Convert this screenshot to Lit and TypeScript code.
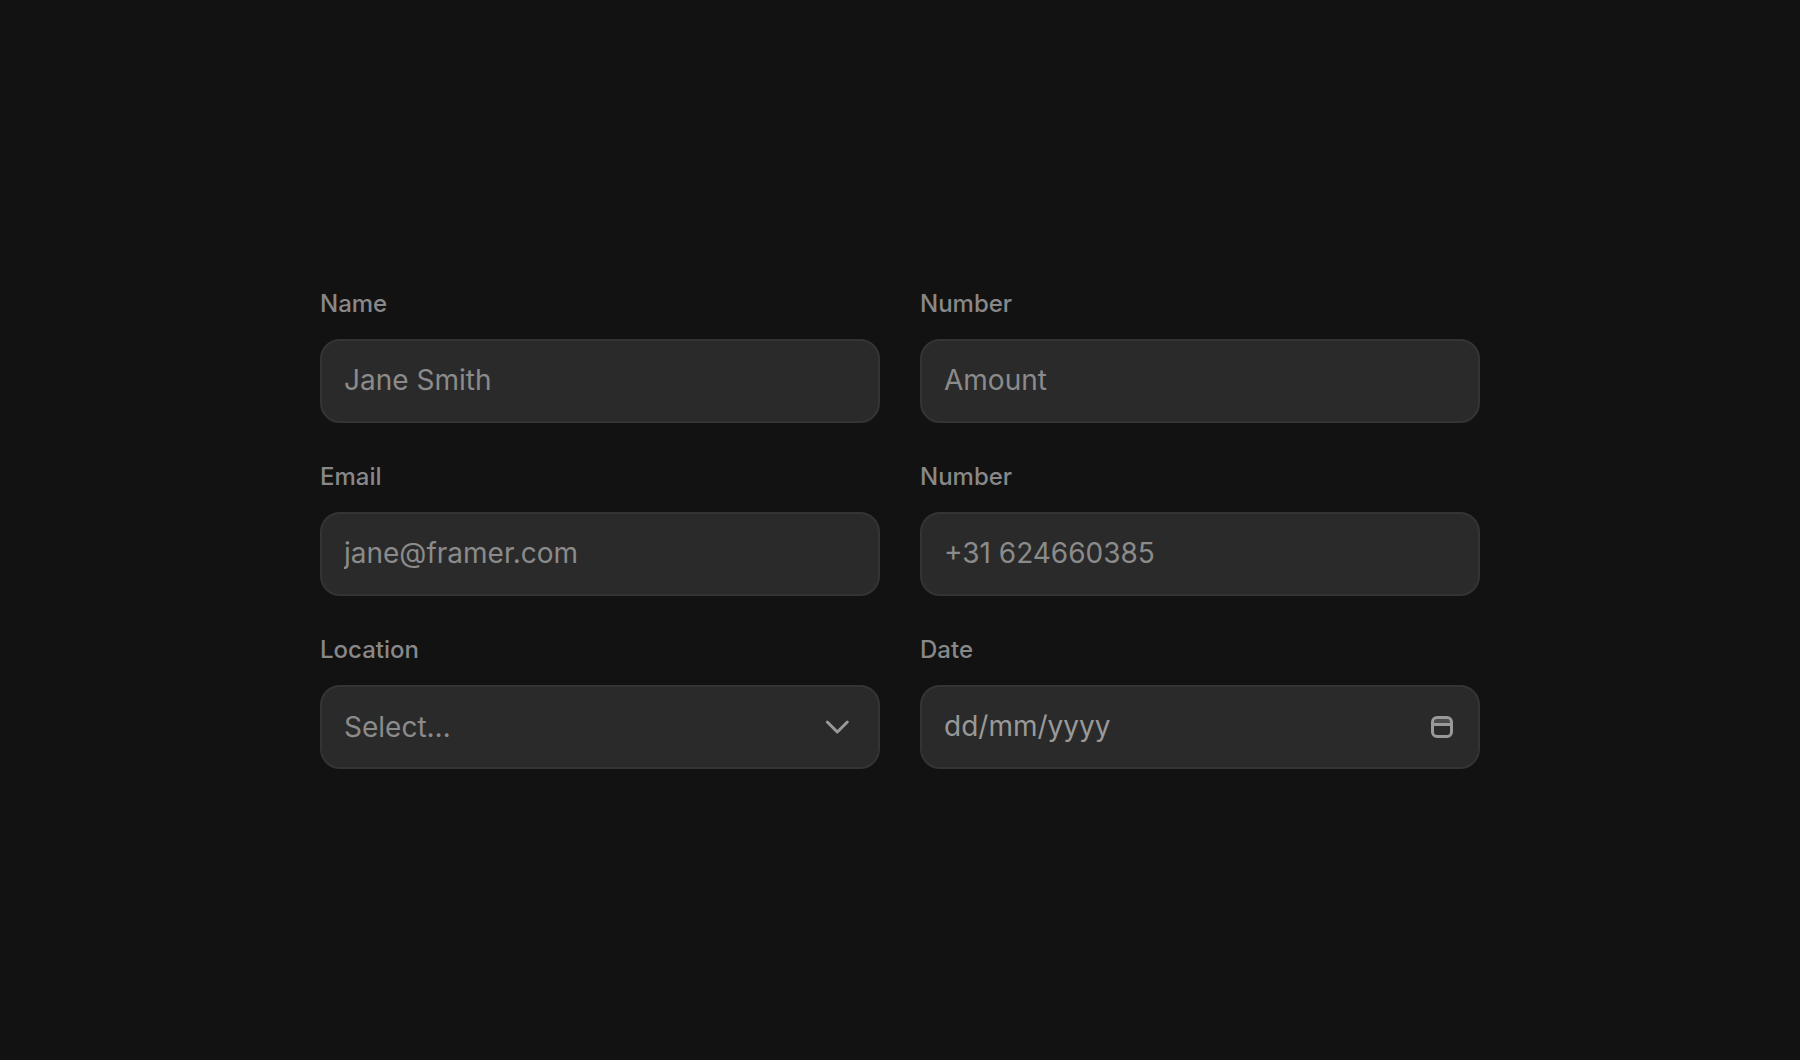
import { LitElement, html, css } from "lit";
import { customElement } from "lit/decorators.js";

interface TextField {
  id: string;
  label: string;
  type: string;
  placeholder: string;
}

const fields: TextField[] = [
  { id: "name", label: "Name", type: "text", placeholder: "Jane Smith" },
  { id: "amount", label: "Number", type: "text", placeholder: "Amount" },
  { id: "email", label: "Email", type: "email", placeholder: "jane@framer.com" },
  { id: "phone", label: "Number", type: "tel", placeholder: "+31 624660385" },
];

@customElement("app-root")
export class AppRoot extends LitElement {
  static styles = css`
    :host {
      display: block;
      font-family: Inter, "Liberation Sans", sans-serif;
      color: #888;
    }
    * {
      box-sizing: border-box;
    }
    .page {
      min-height: 100vh;
      display: grid;
      place-items: center;
      background: #121212;
    }
    .form {
      width: 100%;
      max-width: 1240px;
      padding: 40px 40px 42px;
      display: grid;
      grid-template-columns: repeat(2, minmax(0, 1fr));
      gap: 39px 40px;
    }
    .field {
      display: flex;
      flex-direction: column;
      gap: 21px;
    }
    .label {
      font-size: 24px;
      line-height: 29px;
      font-weight: 500;
    }
    .box {
      display: flex;
      align-items: center;
      height: 84px;
      padding: 0 22px;
      border: 2px solid #343434;
      border-radius: 20px;
      background: #2a2a2a;
    }
    .box:focus-within {
      border-color: #09f;
    }
    .input {
      flex: 1;
      min-width: 0;
      height: 100%;
      margin: 0;
      padding: 0 0 2px;
      border: 0;
      outline: 0;
      background: transparent;
      color: #8b8b8b;
      font: 400 28px/34px Inter, "Liberation Sans", sans-serif;
      appearance: none;
    }
    .input::placeholder {
      color: #8b8b8b;
      opacity: 1;
    }
    .date,
    .date::placeholder {
      color: #999;
    }
    .stack {
      flex: 1;
      height: 100%;
      display: grid;
      grid-template-columns: minmax(0, 1fr) 32px;
      align-items: center;
    }
    .stack .input {
      grid-area: 1 / 1 / 2 / 3;
      padding: 0;
    }
    .icon {
      display: block;
      color: #999;
      pointer-events: none;
    }
    .stack .icon {
      grid-area: 1 / 2 / 2 / 3;
    }
    .picker {
      padding: 0;
      border: 0;
      background: none;
      cursor: pointer;
    }
  `;

  render() {
    return html`
      <main class="page">
        <form class="form">
          ${fields.map(
            (f) => html`
              <div class="field">
                <label class="label" for=${f.id}>${f.label}</label>
                <div class="box">
                  <input class="input" id=${f.id} name=${f.id} type=${f.type} placeholder=${f.placeholder} />
                </div>
              </div>
            `
          )}
          <div class="field">
            <label class="label" for="location">Location</label>
            <div class="box">
              <div class="stack">
                <select class="input" id="location" name="location">
                  <option value="" selected>Select…</option>
                </select>
                <svg class="icon" width="26" height="16" viewBox="0 0 26 16" aria-hidden="true">
                  <path d="M3.3 3 L13.3 13 L23.3 3" fill="none" stroke="currentColor" stroke-width="3" stroke-linecap="round" stroke-linejoin="round" />
                </svg>
              </div>
            </div>
          </div>
          <div class="field">
            <label class="label" for="date">Date</label>
            <div class="box">
              <input class="input date" id="date" name="date" type="text" placeholder="dd/mm/yyyy" />
              <button class="picker" type="button" aria-label="Open calendar">
                <svg class="icon" width="26" height="24" viewBox="0 0 26 24" aria-hidden="true">
                  <rect x="3" y="3" width="18" height="6" fill="currentColor" fill-opacity="0.3" />
                  <rect x="2.5" y="2.5" width="19" height="19" rx="4.5" fill="none" stroke="currentColor" stroke-width="3" />
                  <path d="M2.5 9.5H21.5" stroke="currentColor" stroke-width="3" />
                </svg>
              </button>
            </div>
          </div>
        </form>
      </main>
    `;
  }
}
